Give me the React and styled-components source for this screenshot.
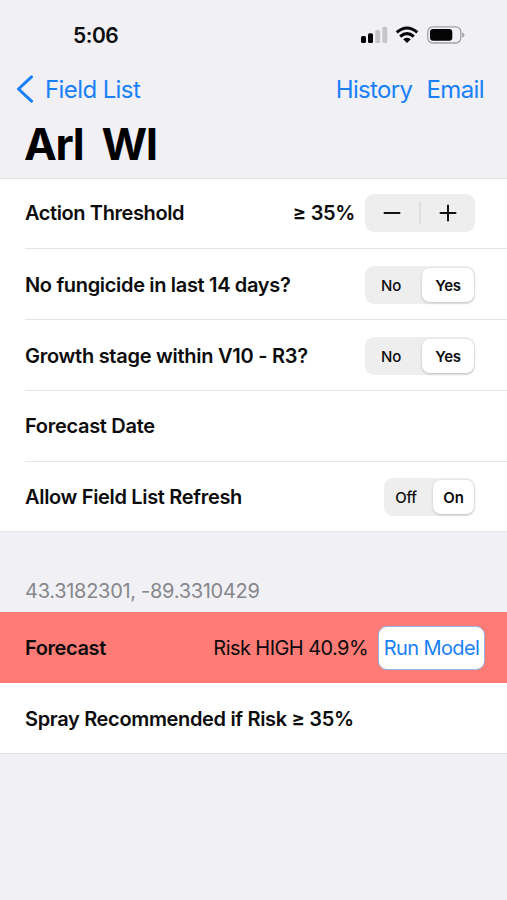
import React, { useState } from "react";

import styled, { createGlobalStyle } from "styled-components";

const GlobalStyle = createGlobalStyle`
  * {
    box-sizing: border-box;
  }

  body {
    margin: 0;
    background: #f0f0f5;
    font-family: Inter, "Liberation Sans", sans-serif;
  }

  button {
    font-family: inherit;
    border: none;
    background: none;
    padding: 0;
    margin: 0;
  }
`;

const Screen = styled.div`
  width: 507px;
  height: 900px;
  overflow: hidden;
  display: flex;
  flex-direction: column;
  background: #f0f0f5;
  color: #0c0c0d;
`;

const StatusBar = styled.div`
  height: 70px;
  flex: none;
  display: flex;
  align-items: center;
  justify-content: space-between;
  padding: 0 42px 0 73px;
`;

const Time = styled.span`
  font-size: 21px;
  font-weight: 600;
  letter-spacing: -0.5px;
`;

const StatusIcons = styled.div`
  display: flex;
  align-items: center;
`;

const NavBar = styled.div`
  height: 38px;
  flex: none;
  display: flex;
  align-items: center;
  justify-content: space-between;
  padding: 0 23px 0 16px;
`;

const NavActions = styled.div`
  display: flex;
  gap: 14px;
`;

const NavButton = styled.button`
  display: flex;
  align-items: center;
  gap: 11px;
  color: #1a80f8;
  font-size: 24px;
  white-space: nowrap;
  letter-spacing: ${(props) => props.$spacing}px;
`;

const Title = styled.h1`
  height: 70px;
  flex: none;
  margin: 0;
  padding-left: 24px;
  padding-top: 1px;
  display: flex;
  align-items: center;
  font-size: 44px;
  font-weight: 700;
  letter-spacing: -1.35px;
  white-space: pre;
  color: #000;
`;

const Group = styled.div`
  flex: none;
  background: #fff;
  border-top: ${(props) => (props.$flush ? "none" : "1px solid #e2e2e5")};
`;

const Row = styled.div`
  height: ${(props) => props.$height || 71}px;
  display: flex;
  align-items: center;
  padding-top: ${(props) => props.$top || 0}px;
  padding-bottom: ${(props) => props.$bottom || 0}px;
  padding-left: 25px;
  padding-right: ${(props) => (props.$alert ? 22 : 32)}px;
  background: ${(props) => (props.$alert ? "#ff7b76" : "#fff")};
  border-bottom: ${(props) => (props.$last ? "1px solid #e4e4e7" : "none")};
`;

const Divider = styled.div`
  height: 1px;
  margin-left: 25px;
  background: #e5e5e7;
`;

const Label = styled.span`
  flex: 1;
  font-size: 20px;
  font-weight: 600;
  letter-spacing: ${(props) => props.$spacing}px;
  white-space: nowrap;
`;

const Value = styled.span`
  font-size: 20px;
  font-weight: ${(props) => props.$weight || 400};
  letter-spacing: ${(props) => props.$spacing}px;
  margin-right: 10px;
  white-space: nowrap;
`;

const Stepper = styled.div`
  width: 110px;
  height: 38px;
  display: flex;
  align-items: center;
  border-radius: 9px;
  background: #eeeeef;
`;

const StepButton = styled.button`
  flex: 1;
  height: 38px;
  display: flex;
  align-items: center;
  justify-content: center;
`;

const StepLine = styled.div`
  width: 2px;
  height: 22px;
  background: #dfdfe1;
`;

const Segments = styled.div`
  width: ${(props) => props.$width}px;
  height: 38px;
  display: flex;
  padding: 2px 1px 2px 2px;
  border-radius: 9px;
  background: #eeeeef;
`;

const Segment = styled.button`
  flex: ${(props) => (props.$active ? "none" : 1)};
  width: ${(props) => props.$width}px;
  height: 34px;
  padding-right: ${(props) => (props.$active ? 0 : 7)}px;
  border-radius: 8px;
  color: #0c0c0d;
  font-size: 15px;
  font-weight: ${(props) => (props.$active ? 600 : 500)};
  letter-spacing: -0.2px;
  background: ${(props) => (props.$active ? "#fff" : "transparent")};
  box-shadow: ${(props) =>
    props.$active ? "0 1px 3px rgba(0, 0, 0, 0.2)" : "none"};
`;

const Coordinates = styled.div`
  height: 80px;
  flex: none;
  display: flex;
  align-items: flex-end;
  padding: 0 25px 9px;
  color: #87878b;
  font-size: 20px;
  letter-spacing: -0.29px;
`;

const RunButton = styled.button`
  width: 107px;
  height: 44px;
  border: 1px solid #9cb7e6;
  border-radius: 9px;
  background: #fff;
  color: #1a80f8;
  font-size: 20px;
  letter-spacing: -0.6px;
  white-space: nowrap;
`;

const Signal = () => (
  <svg width="27" height="18" viewBox="0 0 27 18">
    <rect x="0" y="10" width="5" height="7" rx="1.5" fill="#050505" />
    <rect x="7" y="7.3" width="5" height="9.7" rx="1.5" fill="#050505" />
    <rect x="14.2" y="4" width="5" height="13" rx="1.5" fill="#c6c6ca" />
    <rect x="21.3" y="0.8" width="5" height="16.2" rx="1.5" fill="#c6c6ca" />
  </svg>
);

const Wifi = () => (
  <svg
    width="24"
    height="18"
    viewBox="0 0 24 18"
    fill="none"
    stroke="#050505"
    strokeWidth="3"
  >
    <path d="M1.7 6.4 Q12 -2.3 22.3 6.4" />
    <path d="M5.2 10.5 Q12 4.8 18.8 10.5" />
    <path
      d="M8.2 13.2 Q12 10.4 15.8 13.2 L12 17 Z"
      fill="#050505"
      stroke="none"
    />
  </svg>
);

const Battery = () => (
  <svg width="38" height="18" viewBox="0 0 38 18">
    <rect
      x="0.8"
      y="0.8"
      width="33"
      height="16.2"
      rx="5"
      fill="none"
      stroke="#a2a2a5"
      strokeWidth="1.3"
    />
    <rect x="3" y="3" width="22.3" height="11.8" rx="3.2" fill="#050505" />
    <path d="M35.2 6.2 Q37.5 7.2 37.5 8.9 Q37.5 10.6 35.2 11.6 Z" fill="#a2a2a5" />
  </svg>
);

const IconGap = styled.div`
  width: ${(props) => props.$width}px;
`;

const Chevron = () => (
  <svg width="18" height="28" viewBox="0 0 18 28" fill="none">
    <path
      d="M15.5 1.8 L2.5 14 L15.5 26.2"
      stroke="#1a80f8"
      strokeWidth="3"
      strokeLinecap="round"
      strokeLinejoin="round"
    />
  </svg>
);

const StepIcon = ({ plus }) => (
  <svg width="18" height="18" viewBox="0 0 18 18" stroke="#111" strokeWidth="2">
    <path d={plus ? "M1.5 9 H16.5 M9 1.5 V16.5" : "M1.5 9 H16.5"} strokeLinecap="round" />
  </svg>
);

const Toggle = ({ options, initial, width, thumb }) => {
  const [selected, setSelected] = useState(initial);

  return (
    <Segments $width={width}>
      {options.map((option) => (
        <Segment
          key={option}
          $active={option === selected}
          $width={thumb}
          onClick={() => setSelected(option)}
        >
          {option}
        </Segment>
      ))}
    </Segments>
  );
};

export default () => {
  const [threshold, setThreshold] = useState(35);

  return (
    <Screen>
      <GlobalStyle />
      <StatusBar>
        <Time>5:06</Time>
        <StatusIcons>
          <Signal />
          <IconGap $width={7.5} />
          <Wifi />
          <IconGap $width={8} />
          <Battery />
        </StatusIcons>
      </StatusBar>
      <NavBar>
        <NavButton $spacing={-0.6}>
          <Chevron />
          Field List
        </NavButton>
        <NavActions>
          <NavButton $spacing={-0.65}>History</NavButton>
          <NavButton $spacing={-0.6}>Email</NavButton>
        </NavActions>
      </NavBar>
      <Title>{"Arl  WI"}</Title>

      <Group>
        <Row $height={69} $bottom={1}>
          <Label $spacing={-0.4}>Action Threshold</Label>
          <Value $weight={600} $spacing={-0.35}>
            ≥ {threshold}%
          </Value>
          <Stepper>
            <StepButton onClick={() => setThreshold(threshold - 5)}>
              <StepIcon />
            </StepButton>
            <StepLine />
            <StepButton onClick={() => setThreshold(threshold + 5)}>
              <StepIcon plus />
            </StepButton>
          </Stepper>
        </Row>
        <Divider />
        <Row $height={70} $top={2}>
          <Label $spacing={-0.33}>No fungicide in last 14 days?</Label>
          <Toggle options={["No", "Yes"]} initial="Yes" width={110} thumb={52} />
        </Row>
        <Divider />
        <Row $height={70} $top={2}>
          <Label $spacing={-0.27}>Growth stage within V10 - R3?</Label>
          <Toggle options={["No", "Yes"]} initial="Yes" width={110} thumb={52} />
        </Row>
        <Divider />
        <Row $height={70}>
          <Label $spacing={-0.3}>Forecast Date</Label>
        </Row>
        <Divider />
        <Row $height={70} $top={1} $last>
          <Label $spacing={-0.33}>Allow Field List Refresh</Label>
          <Toggle options={["Off", "On"]} initial="On" width={91} thumb={41} />
        </Row>
      </Group>

      <Coordinates>43.3182301, -89.3310429</Coordinates>

      <Group $flush>
        <Row $alert>
          <Label $spacing={-0.4}>Forecast</Label>
          <Value $spacing={-0.57}>Risk HIGH 40.9%</Value>
          <RunButton>Run Model</RunButton>
        </Row>
        <Row $top={1} $last>
          <Label $spacing={-0.34}>Spray Recommended if Risk ≥ 35%</Label>
        </Row>
      </Group>
    </Screen>
  );
};
